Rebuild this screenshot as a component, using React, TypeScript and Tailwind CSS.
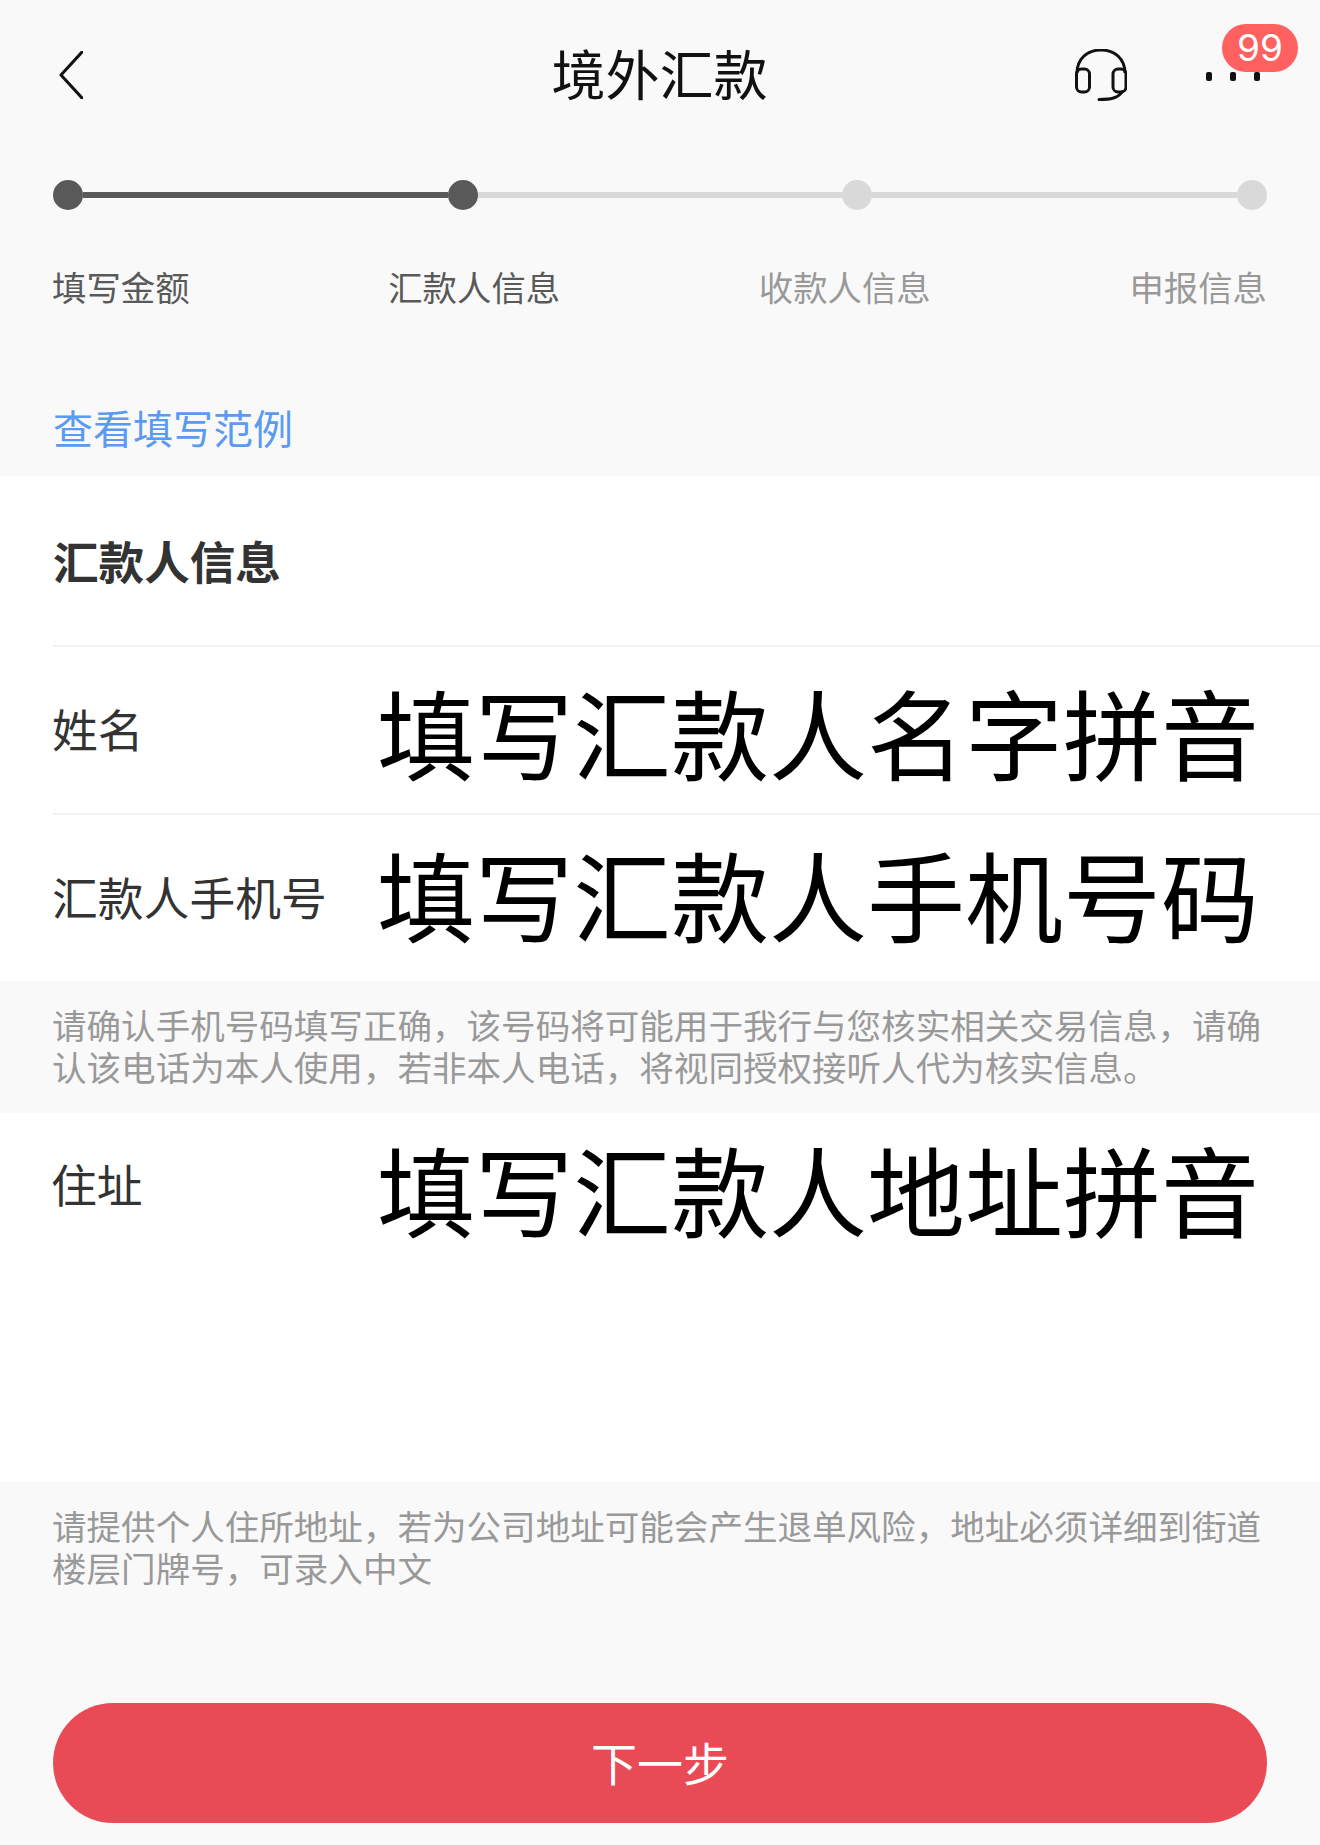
const cjk = 'font-["Noto_Sans_CJK_SC","Noto_Sans",sans-serif]';

const steps = [
  { label: '填写金额', done: true },
  { label: '汇款人信息', done: true },
  { label: '收款人信息', done: false },
  { label: '申报信息', done: false },
];

const Stepper = () => (
  <div className="px-[53px]">
    <div className="flex items-center mt-[30px]">
      <div className="w-[30px] h-[30px] rounded-full bg-[#595959]" />
      <div className="flex-1 h-[6px] bg-[#595959]" />
      <div className="w-[30px] h-[30px] rounded-full bg-[#595959]" />
      <div className="flex-1 h-[6px] bg-[#d9d9d9]" />
      <div className="w-[30px] h-[30px] rounded-full bg-[#d9d9d9]" />
      <div className="flex-1 h-[6px] bg-[#d9d9d9]" />
      <div className="w-[30px] h-[30px] rounded-full bg-[#d9d9d9]" />
    </div>
    <div className="flex justify-between mt-[53px] -ml-[1px]">
      {steps.map((s) => (
        <span
          key={s.label}
          className={s.done ? 'text-[34.4px] leading-[46px] text-[#595959]' : 'text-[34.4px] leading-[46px] text-[#999999]'}
        >
          {s.label}
        </span>
      ))}
    </div>
  </div>
);

const Header = () => (
  <div className="relative flex items-center justify-between h-[150px] pl-[59px] pr-[60px]">
    <div className="w-[185px] shrink-0">
      <svg width="24" height="48" viewBox="0 0 24 48" fill="none">
        <path d="M23 1 L2 24 L23 47" stroke="#111" strokeWidth="3" strokeLinecap="round" strokeLinejoin="round" />
      </svg>
    </div>
    <h1 className="text-[54px] leading-[70px] font-normal text-[#111] mb-[4px]">境外汇款</h1>
    <div className="relative flex items-center w-[185px] h-[60px]">
      <svg width="52" height="52" viewBox="0 0 52 52" fill="none" className="absolute left-0 top-[4px]">
        <path d="M2 24 C2 10 12 1 26 1 C40 1 50 10 50 24" stroke="#111" strokeWidth="3" />
        <rect x="1.5" y="20" width="13" height="23" rx="5" stroke="#111" strokeWidth="3" />
        <rect x="38" y="20" width="13" height="23" rx="5" stroke="#111" strokeWidth="3" />
        <path d="M47 43 C43 49 36 50.5 24 50.5" stroke="#111" strokeWidth="3" strokeLinecap="round" />
      </svg>
      <div className="absolute left-[131px] top-[27px] w-[6px] h-[9px] rounded-[2px] bg-[#111]" />
      <div className="absolute left-[155px] top-[27px] w-[6px] h-[9px] rounded-[2px] bg-[#111]" />
      <div className="absolute left-[179px] top-[27px] w-[6px] h-[9px] rounded-[2px] bg-[#111]" />
    </div>
    <div className="absolute left-[1222px] top-[24px] flex items-center justify-center w-[76px] h-[48px] rounded-full bg-[#ff6060] text-white text-[37px] leading-[48px] font-['Inter',sans-serif]">
      99
    </div>
  </div>
);

const FieldRow = ({ label, value, className, valueClass }: { label: string; value: string; className: string; valueClass: string }) => (
  <div className={`flex items-center ml-[53px] ${className}`}>
    <span className="w-[324px] -ml-[1px] mr-[1px] shrink-0 mb-[4px] text-[45.8px] text-[#333333]">{label}</span>
    <span className={`text-[98px] leading-[120px] text-black whitespace-nowrap ${valueClass}`}>{value}</span>
  </div>
);

const Note = ({ children, className }: { children: string; className: string }) => (
  <div className={className}>
    <p className="text-[34.55px] leading-[42px] text-[#999999]">{children}</p>
  </div>
);

export default function App() {
  return (
    <div className={`w-[1320px] h-[1845px] overflow-hidden bg-[#f9f9f9] ${cjk}`}>
      <Header />
      <Stepper />

      <div className="px-[53px] mt-[94px] pb-[25px] text-[40px] leading-[48px] text-[#5a9af1]">查看填写范例</div>

      <div className="bg-white">
        <div className="flex items-center h-[171px] ml-[53px] border-b-2 border-[#f2f2f2]">
          <span className="text-[45.6px] font-bold text-[#333333]">汇款人信息</span>
        </div>
        <FieldRow
          label="姓名"
          value="填写汇款人名字拼音"
          className="h-[168px] border-b-2 border-[#f2f2f2]"
          valueClass="mt-0"
        />
        <FieldRow label="汇款人手机号" value="填写汇款人手机号码" className="h-[166px]" valueClass="mb-[12px]" />
      </div>

      <Note className="h-[132px] pt-[22px] pl-[52px] pr-[53px]">
        请确认手机号码填写正确，该号码将可能用于我行与您核实相关交易信息，请确认该电话为本人使用，若非本人电话，将视同授权接听人代为核实信息。
      </Note>

      <div className="flex items-start h-[369px] pl-[51px] bg-white">
        <span className="w-[326px] shrink-0 mt-[40px] text-[45.8px] leading-[60px] text-[#333333]">住址</span>
        <span className="mt-[14px] text-[98px] leading-[120px] text-black whitespace-nowrap">填写汇款人地址拼音</span>
      </div>

      <Note className="pt-[22px] pl-[52px] pr-[53px]">
        请提供个人住所地址，若为公司地址可能会产生退单风险，地址必须详细到街道楼层门牌号，可录入中文
      </Note>

      <div className="px-[53px] mt-[115px]">
        <button className="w-full h-[120px] pb-[4px] rounded-full bg-[#e84b56] text-white text-[46px]">下一步</button>
      </div>
    </div>
  );
}
